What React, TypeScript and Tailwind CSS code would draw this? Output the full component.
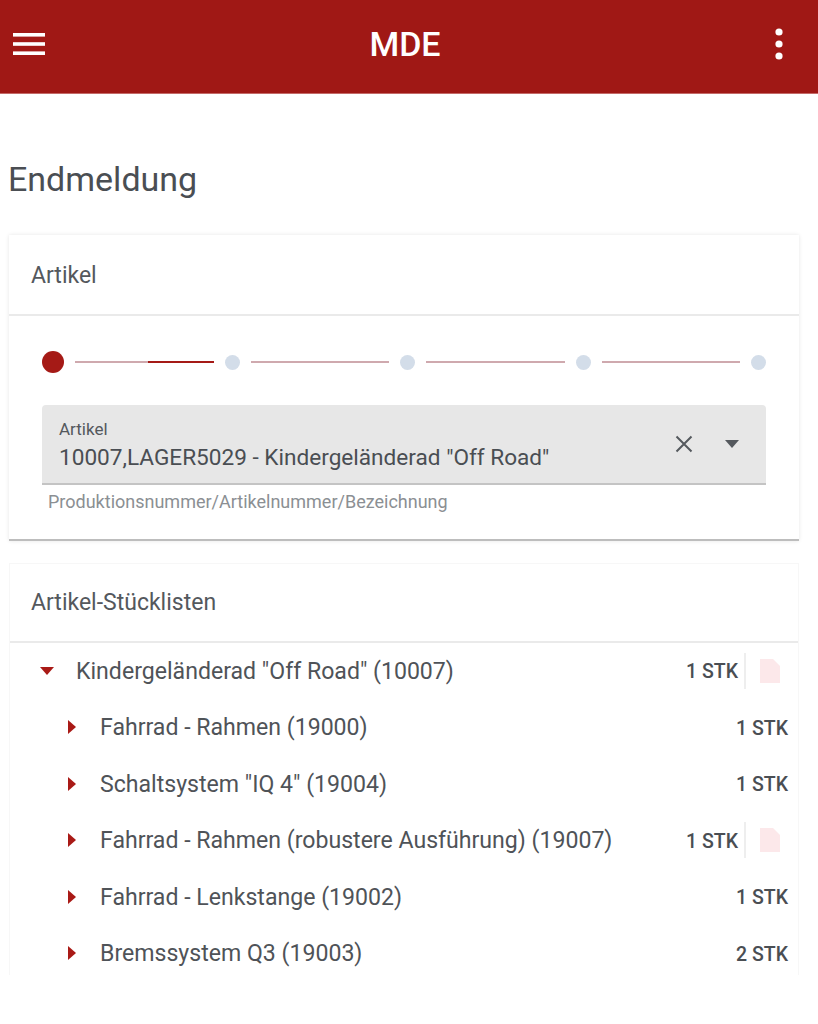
const STEPS = [0, 1, 2, 3]

const ROWS = [
  { name: 'Fahrrad - Rahmen (19000)', qty: '1 STK', doc: false },
  { name: 'Schaltsystem "IQ 4" (19004)', qty: '1 STK', doc: false },
  { name: 'Fahrrad - Rahmen (robustere Ausführung) (19007)', qty: '1 STK', doc: true },
  { name: 'Fahrrad - Lenkstange (19002)', qty: '1 STK', doc: false },
  { name: 'Bremssystem Q3 (19003)', qty: '2 STK', doc: false },
]

function MenuIcon() {
  return (
    <svg width="32" height="24" viewBox="0 0 32 24" fill="#ffffff">
      <rect x="0" y="1" width="32" height="3.6" />
      <rect x="0" y="10.2" width="32" height="3.6" />
      <rect x="0" y="19.4" width="32" height="3.6" />
    </svg>
  )
}

function DotsIcon() {
  return (
    <svg width="10" height="32" viewBox="0 0 10 32" fill="#ffffff">
      <circle cx="5" cy="4" r="3.6" />
      <circle cx="5" cy="16" r="3.6" />
      <circle cx="5" cy="28" r="3.6" />
    </svg>
  )
}

function CaretRight() {
  return (
    <svg width="8" height="14" viewBox="0 0 8 14" fill="#a91a16">
      <path d="M0 0 L8 7 L0 14 Z" />
    </svg>
  )
}

function CaretDown() {
  return (
    <svg width="14" height="8" viewBox="0 0 14 8" fill="#a91a16">
      <path d="M0 0 L14 0 L7 8 Z" />
    </svg>
  )
}

function DocIcon() {
  return (
    <svg width="20" height="24" viewBox="0 0 20 24" fill="#fce8ea">
      <path d="M0 0 H13 L20 7 V24 H0 Z" />
    </svg>
  )
}

function DocCell() {
  return (
    <div className="flex items-center h-9 ml-[6px] border-l-2 border-[#eeeeee] pl-[14px] pr-[18px]">
      <DocIcon />
    </div>
  )
}

export default function App() {
  return (
    <div className="h-[1024px] w-[818px] overflow-hidden bg-white text-[#4f5358] font-['Roboto',sans-serif]">
      <header className="relative flex h-[94px] items-center justify-between bg-[#a01815] pb-[6px] pl-[13px] pr-[34px] border-b border-[#c46a68]">
        <MenuIcon />
        <div className="absolute left-0 right-[8px] top-[22px] text-center text-[34px] leading-[44px] font-medium text-white">MDE</div>
        <DotsIcon />
      </header>

      <main className="px-[9px] pr-[19px]">
        <h1 className="mt-[63px] -ml-px text-[34px] leading-[44px] font-normal text-[#4a4e53]">Endmeldung</h1>

        <section className="mt-[34px] h-[306px] border-b-2 border-[#bdbdbd] bg-white shadow-[0_0_4px_rgba(0,0,0,0.10)]">
          <div className="flex h-[81px] items-center border-b-2 border-[#eaeaea] pt-[3px] pl-[22px] text-[23px] text-[#54585d]">Artikel</div>

          <div className="px-[33px]">
            <div className="mt-[34px] flex h-[24px] items-center">
              <div className="h-[22px] w-[22px] shrink-0 rounded-full bg-[#a51a16]" />
              {STEPS.map(i => (
                <div key={i} className="flex flex-1 items-center">
                  <div className="relative ml-[11px] mr-[11px] h-[2px] flex-1 bg-[#cfa9ae]">
                    {i === 0 && <div className="absolute right-0 top-0 h-[2px] w-[66px] bg-[#a51a16]" />}
                  </div>
                  <div className="h-[15px] w-[15px] shrink-0 rounded-full bg-[#d3dde9]" />
                </div>
              ))}
            </div>

            <div className="mt-[31px] flex h-[80px] items-center rounded-t-[4px] border-b-2 border-[#c4c4c4] bg-[#e7e7e7] pl-[17px]">
              <div className="flex-1 self-start pt-[14px]">
                <div className="text-[17px] leading-[20px] text-[#54585d]">Artikel</div>
                <div className="mt-[4px] text-[22.6px] leading-[30px] text-[#4a4e53]">10007,LAGER5029 - Kindergeländerad "Off Road"</div>
              </div>
              <svg width="18" height="18" viewBox="0 0 18 18" stroke="#55595e" strokeWidth="2" fill="none" className="mr-[32px]">
                <path d="M1.5 1.5 L16.5 16.5 M16.5 1.5 L1.5 16.5" />
              </svg>
              <svg width="14" height="8" viewBox="0 0 14 8" fill="#55595e" className="mr-[27px]">
                <path d="M0 0 L14 0 L7 8 Z" />
              </svg>
            </div>

            <div className="mt-[7px] pl-[6px] text-[18px] leading-[20px] text-[#8b8f93]">Produktionsnummer/Artikelnummer/Bezeichnung</div>
          </div>
        </section>

        <section className="mt-[22px] h-[412px] border-x border-t border-[#f7f7f7] bg-white">
          <div className="flex h-[79px] items-center border-b-2 border-[#eaeaea] pt-[1px] pl-[21px] text-[23px] text-[#54585d]">Artikel-Stücklisten</div>

          <div className="flex h-[56px] items-center pl-[30px] text-[23.1px]">
            <CaretDown />
            <span className="ml-[22px] flex-1 pt-[3px]">Kindergeländerad "Off Road" (10007)</span>
            <span className="pt-[2px] text-[19.5px] font-medium text-[#4a4e53]">1 STK</span>
            <DocCell />
          </div>

          {ROWS.map(row => (
            <div key={row.name} className="flex h-[56.5px] items-center pl-[58px] text-[23.1px]">
              <CaretRight />
              <span className="ml-[24px] flex-1 pt-[3px]">{row.name}</span>
              <span className={row.doc ? 'pt-[2px] text-[19.5px] font-medium text-[#4a4e53]' : 'mr-[10px] pt-[2px] text-[19.5px] font-medium text-[#4a4e53]'}>{row.qty}</span>
              {row.doc && <DocCell />}
            </div>
          ))}
        </section>
      </main>
    </div>
  )
}
